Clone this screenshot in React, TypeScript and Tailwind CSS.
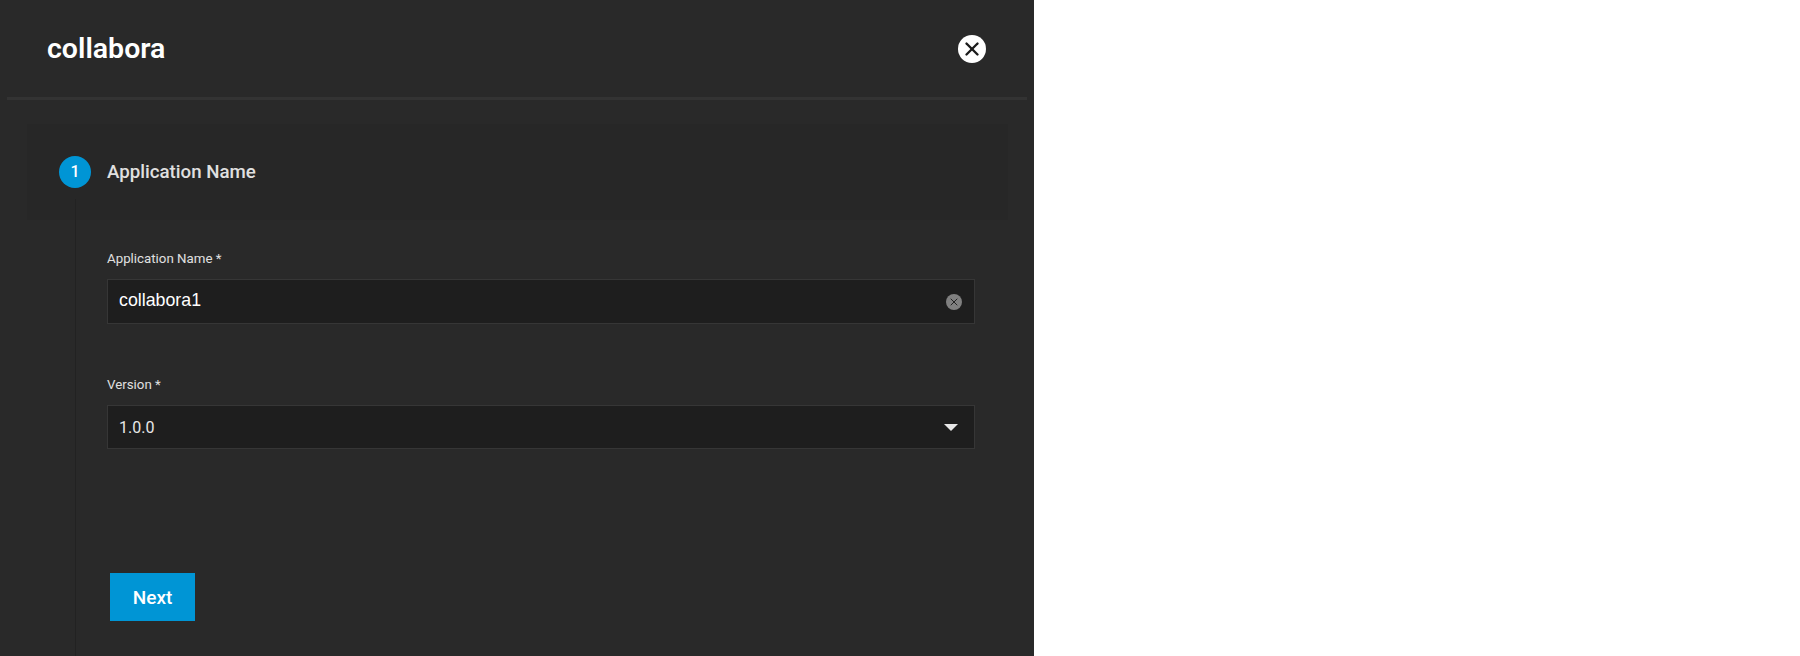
import {X} from "lucide-react";

const App = () => {
    return <div className="flex w-[1800px] h-[656px] overflow-hidden bg-white font-['Roboto',sans-serif]">
        <div className="w-[1034px] h-full bg-[#292929] flex flex-col">
            <div className="mx-[7px] h-[100px] shrink-0 pl-[40px] pr-[41px] border-b-[3px] border-b-[#333333] flex items-center justify-between">
                <h1 className="text-[28.5px] leading-[36px] font-semibold text-white">collabora</h1>
                <button className="w-7 h-7 rounded-full bg-white flex items-center justify-center">
                    <X className="w-[22px] h-[22px] text-[#1b1b1b]" strokeWidth={2.6}/>
                </button>
            </div>
            <div className="ml-[27px] mr-[26px] mt-[24px] h-[96px] shrink-0 bg-[#272727] pl-[32px] flex items-center gap-4">
                <div className="w-8 h-8 rounded-full bg-[#0095d5] text-white text-[16px] font-medium flex items-center justify-center">1</div>
                <div className="text-[18.7px] leading-6 font-medium text-[#e0e0e0]">Application Name</div>
            </div>
            <div className="flex-1 ml-[75px] border-l border-l-[#222222] -mt-[21px] pt-[21px]">
                <div className="pl-[31px] w-[899px] pt-[30px]">
                    <label className="block text-[13.3px] leading-[18px] text-[#e0e0e0]">Application Name *</label>
                    <div className="mt-[11px] h-[45px] bg-[#1e1e1e] border border-[#363636] flex items-center justify-between pl-[11px] pr-[12px]">
                        <span className="font-['Liberation_Sans',sans-serif] text-[17.8px] text-white -mt-[2px]">collabora1</span>
                        <span className="w-4 h-4 rounded-full bg-[#808080] flex items-center justify-center mt-[1px]">
                            <X className="w-3 h-3 text-[#222222]" strokeWidth={2}/>
                        </span>
                    </div>
                    <label className="block mt-[52px] text-[13.3px] leading-[18px] text-[#e0e0e0]">Version *</label>
                    <div className="mt-[11px] h-[44px] bg-[#1e1e1e] border border-[#363636] flex items-center justify-between pl-[11px] pr-[16px]">
                        <span className="text-[16px] text-[#e8e8e8] mt-[1px]">1.0.0</span>
                        <span className="w-0 h-0 border-l-[7px] border-r-[7px] border-t-[7px] border-l-transparent border-r-transparent border-t-[#e8e8e8]"></span>
                    </div>
                    <button className="block mt-[124px] ml-[3px] w-[85px] h-[48px] pt-[3px] bg-[#0095d5] text-white text-[19px] font-medium">Next</button>
                </div>
            </div>
        </div>
    </div>
}

export default App
